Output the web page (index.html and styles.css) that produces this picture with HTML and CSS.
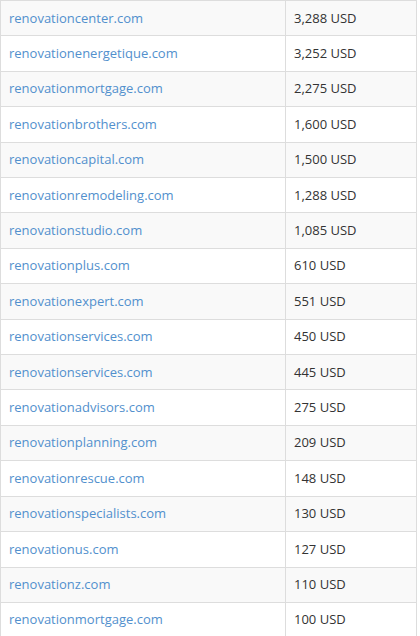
FILE: index.html
```html
<!DOCTYPE html>
<html>
<head>
<meta charset="utf-8">
<link rel="stylesheet" href="styles.css">
</head>
<body>
<table class="domains">
<tbody>
<tr><td class="name"><a href="#">renovationcenter.com</a></td><td class="price">3,288 USD</td></tr>
<tr><td class="name"><a href="#">renovationenergetique.com</a></td><td class="price">3,252 USD</td></tr>
<tr><td class="name"><a href="#">renovationmortgage.com</a></td><td class="price">2,275 USD</td></tr>
<tr><td class="name"><a href="#">renovationbrothers.com</a></td><td class="price">1,600 USD</td></tr>
<tr><td class="name"><a href="#">renovationcapital.com</a></td><td class="price">1,500 USD</td></tr>
<tr><td class="name"><a href="#">renovationremodeling.com</a></td><td class="price">1,288 USD</td></tr>
<tr><td class="name"><a href="#">renovationstudio.com</a></td><td class="price">1,085 USD</td></tr>
<tr><td class="name"><a href="#">renovationplus.com</a></td><td class="price">610 USD</td></tr>
<tr><td class="name"><a href="#">renovationexpert.com</a></td><td class="price">551 USD</td></tr>
<tr><td class="name"><a href="#">renovationservices.com</a></td><td class="price">450 USD</td></tr>
<tr><td class="name"><a href="#">renovationservices.com</a></td><td class="price">445 USD</td></tr>
<tr><td class="name"><a href="#">renovationadvisors.com</a></td><td class="price">275 USD</td></tr>
<tr><td class="name"><a href="#">renovationplanning.com</a></td><td class="price">209 USD</td></tr>
<tr><td class="name"><a href="#">renovationrescue.com</a></td><td class="price">148 USD</td></tr>
<tr><td class="name"><a href="#">renovationspecialists.com</a></td><td class="price">130 USD</td></tr>
<tr><td class="name"><a href="#">renovationus.com</a></td><td class="price">127 USD</td></tr>
<tr><td class="name"><a href="#">renovationz.com</a></td><td class="price">110 USD</td></tr>
<tr><td class="name"><a href="#">renovationmortgage.com</a></td><td class="price">100 USD</td></tr>
</tbody>
</table>
</body>
</html>
```

FILE: styles.css
```css
html, body {
  margin: 0;
  padding: 0;
  background: #fff;
}
body {
  font-family: "Open Sans", "Liberation Sans", sans-serif;
  font-size: 13px;
  color: #333;
}
.domains {
  width: 417px;
  border-collapse: collapse;
  border: 1px solid #ddd;
}
.domains td {
  border: 1px solid #ddd;
  padding: 7.5px 8px 8.5px;
  line-height: 18.4px;
  vertical-align: top;
}
.domains tr:nth-child(odd) td {
  background: #f9f9f9;
}
.domains .name {
  width: 268px;
}
.domains a {
  color: #5290cd;
  text-decoration: none;
}
```
